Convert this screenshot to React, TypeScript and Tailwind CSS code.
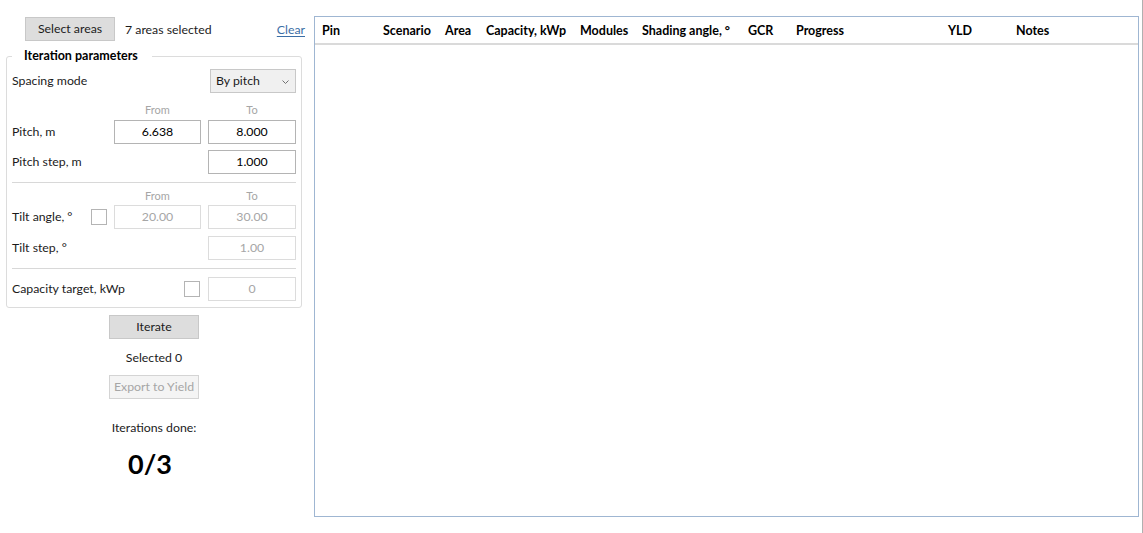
import React from "react";

const FONT = { fontFamily: 'Lato, "Noto Sans", Arial, sans-serif' };

const columns: { title: string; width: string }[] = [
  { title: "Pin", width: "w-[61px]" },
  { title: "Scenario", width: "w-[62px]" },
  { title: "Area", width: "w-[41px]" },
  { title: "Capacity, kWp", width: "w-[94px]" },
  { title: "Modules", width: "w-[62px]" },
  { title: "Shading angle, °", width: "w-[106px]" },
  { title: "GCR", width: "w-[48px]" },
  { title: "Progress", width: "w-[152px]" },
  { title: "YLD", width: "w-[68px]" },
  { title: "Notes", width: "flex-1" },
];

const Field: React.FC<{ value: string; disabled?: boolean }> = ({ value, disabled }) => (
  <div
    className={
      disabled
        ? "h-[24px] pt-[1px] border border-[#dcdcdc] bg-white flex items-center justify-center text-[#a6a6a6]"
        : "h-[24px] pt-[1px] border border-[#b4b4b4] bg-white flex items-center justify-center text-black"
    }
  >
    {value}
  </div>
);

const Check: React.FC = () => (
  <div className="w-[16px] h-[16px] border border-[#b4b4b4] bg-white" />
);

const FromTo: React.FC<{ className?: string }> = ({ className }) => (
  <div
    className={`grid grid-cols-[minmax(0,1fr)_87px_88px] gap-x-[7px] text-[11px] leading-[14px] text-[#a6a6a6] ${className ?? ""}`}
  >
    <div />
    <div className="text-center">From</div>
    <div className="text-center">To</div>
  </div>
);

const Row: React.FC<{ className?: string; children: React.ReactNode }> = ({ className, children }) => (
  <div
    className={`grid grid-cols-[minmax(0,1fr)_87px_88px] gap-x-[7px] items-center whitespace-nowrap ${className ?? ""}`}
  >
    {children}
  </div>
);

export default function App() {
  return (
    <div
      style={FONT}
      className="w-[1143px] h-[533px] bg-white flex text-[12.3px] text-[#1b1b1b] border-r border-[#b0b0b0] overflow-hidden"
    >
      {/* left panel */}
      <div className="w-[308px] flex flex-col shrink-0">
        <div className="mt-[17px] h-[24px] flex items-center">
          <button className="ml-[25px] w-[90px] h-[24px] pt-[1px] bg-[#dddddd] border border-[#c8c8c8]">
            Select areas
          </button>
          <span className="ml-[10px] pt-[2px]">7 areas selected</span>
          <span className="ml-auto mr-[3px] pt-[2px] text-[#3b6ea6] underline underline-offset-2">Clear</span>
        </div>

        <fieldset className="mt-[7px] ml-[6px] w-[296px] border border-[#dcdcdc] rounded-[3px] px-[5px] pb-[6px]">
          <legend className="pl-[12px] pr-[14px] font-bold text-[12.5px] leading-[16px] text-black">
            Iteration parameters
          </legend>

          <div className="mt-[5px] flex items-center h-[24px]">
            <span className="pt-[1px]">Spacing mode</span>
            <div className="ml-auto w-[86px] h-[24px] pt-[1px] bg-[#f0f0f0] border border-[#c8c8c8] flex items-center px-[5px]">
              <span>By pitch</span>
              <svg className="ml-auto mr-[1px]" width="7" height="4" viewBox="0 0 7 4">
                <path d="M0.5 0.5 L3.5 3.5 L6.5 0.5" fill="none" stroke="#707070" strokeWidth="1" />
              </svg>
            </div>
          </div>

          <FromTo className="mt-[10px]" />

          <Row className="mt-[3px]">
            <span className="pt-[1px]">Pitch, m</span>
            <Field value="6.638" />
            <Field value="8.000" />
          </Row>
          <Row className="mt-[6px]">
            <span className="pt-[1px]">Pitch step, m</span>
            <div />
            <Field value="1.000" />
          </Row>

          <div className="mt-[8px] h-px bg-[#d8d8d8]" />

          <FromTo className="mt-[6px]" />

          <Row className="mt-[2px]">
            <div className="flex items-center">
              <span className="pt-[1px]">Tilt angle, °</span>
              <div className="ml-auto">
                <Check />
              </div>
            </div>
            <Field value="20.00" disabled />
            <Field value="30.00" disabled />
          </Row>
          <Row className="mt-[7px]">
            <span className="pt-[1px]">Tilt step, °</span>
            <div />
            <Field value="1.00" disabled />
          </Row>

          <div className="mt-[8px] h-px bg-[#d8d8d8]" />

          <Row className="mt-[8px]">
            <span className="pt-[1px]">Capacity target, kWp</span>
            <div className="flex justify-end pr-[1px]">
              <Check />
            </div>
            <Field value="0" disabled />
          </Row>
        </fieldset>

        <div className="flex flex-col items-center ml-[6px] w-[296px]">
          <button className="mt-[7px] w-[90px] h-[24px] pt-[1px] bg-[#dddddd] border border-[#c8c8c8]">Iterate</button>
          <div className="mt-[11px] leading-[16px]">Selected 0</div>
          <button className="mt-[9px] w-[90px] h-[24px] pt-[1px] bg-[#f4f4f4] border border-[#d4d4d4] text-[#a6a6a6]">
            Export to Yield
          </button>
          <div className="mt-[21px] leading-[16px]">Iterations done:</div>
          <div className="mt-[11px] mr-[8px] text-[27px] font-bold leading-[34px] text-black">0/3</div>
        </div>
      </div>

      {/* results table */}
      <div className="mt-[16px] mb-[16px] ml-[6px] mr-[3px] flex-1 border border-[#9fb6d2] flex flex-col">
        <div className="h-[28px] pt-[3px] border-b-2 border-[#dadada] flex items-center pl-[7px] font-bold text-[12.5px] text-black">
          {columns.map((c) => (
            <div key={c.title} className={`${c.width} shrink-0 whitespace-nowrap`}>
              {c.title}
            </div>
          ))}
        </div>
        <div className="flex-1 bg-white" />
      </div>
    </div>
  );
}
